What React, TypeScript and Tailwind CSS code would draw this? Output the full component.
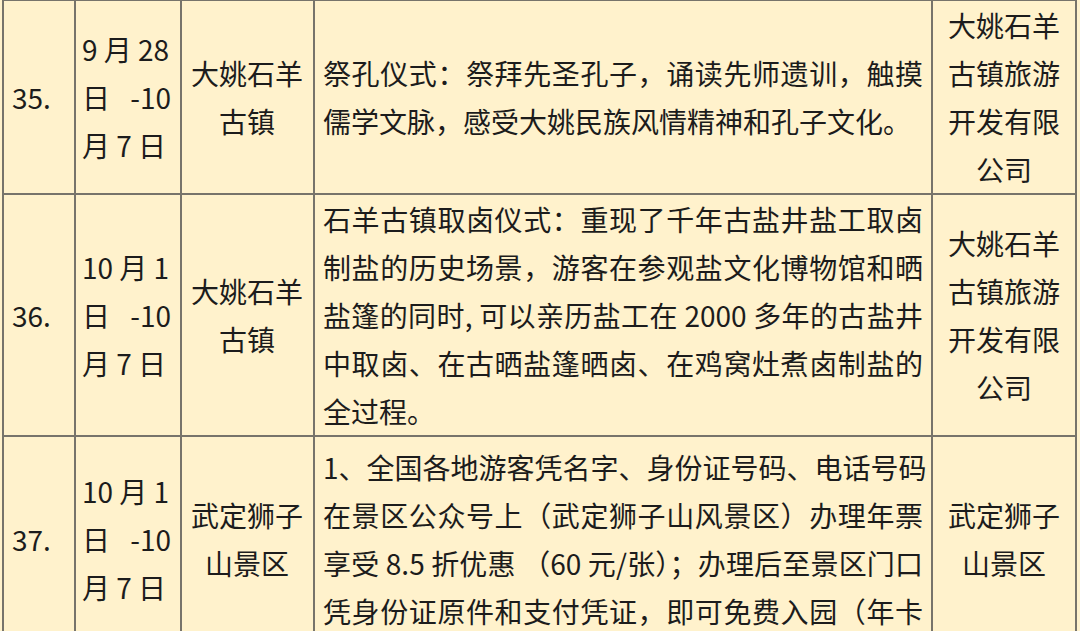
const line = "#77746b";

type Row = {
  no: string;
  date: string[];
  place: string[];
  detail: string[];
  org: string[];
  fixedHeight?: boolean;
};

const rows: Row[] = [
  {
    no: "35.",
    date: ["9 月 28", "日\u2002 -10", "月 7 日"],
    place: ["大姚石羊", "古镇"],
    detail: [
      "祭孔仪式：祭拜先圣孔子，诵读先师遗训，触摸",
      "儒学文脉，感受大姚民族风情精神和孔子文化。",
    ],
    org: ["大姚石羊", "古镇旅游", "开发有限", "公司"],
  },
  {
    no: "36.",
    date: ["10 月 1", "日\u2002 -10", "月 7 日"],
    place: ["大姚石羊", "古镇"],
    detail: [
      "石羊古镇取卤仪式：重现了千年古盐井盐工取卤",
      "制盐的历史场景，游客在参观盐文化博物馆和晒",
      "盐篷的同时, 可以亲历盐工在 2000 多年的古盐井",
      "中取卤、在古晒盐篷晒卤、在鸡窝灶煮卤制盐的",
      "全过程。",
    ],
    org: ["大姚石羊", "古镇旅游", "开发有限", "公司"],
  },
  {
    no: "37.",
    date: ["10 月 1", "日\u2002 -10", "月 7 日"],
    place: ["武定狮子", "山景区"],
    detail: [
      "1、全国各地游客凭名字、身份证号码、电话号码",
      "在景区公众号上（武定狮子山风景区）办理年票",
      "享受 8.5 折优惠 （60 元/张）；办理后至景区门口",
      "凭身份证原件和支付凭证，即可免费入园（年卡",
    ],
    org: ["武定狮子", "山景区"],
    fixedHeight: true,
  },
];

function Lines({ items, center }: { items: string[]; center?: boolean }) {
  return (
    <div className={center ? "text-center" : "text-left"}>
      {items.map((t, i) => (
        <div key={i} className="whitespace-pre">
          {t}
        </div>
      ))}
    </div>
  );
}

function Cell({
  children,
  className = "",
  fixed,
}: {
  children: React.ReactNode;
  className?: string;
  fixed?: boolean;
}) {
  return (
    <div className={`border-r-2 border-b-2 border-[#77746b] ${className}`}>
      <div className={`flex flex-col justify-center ${fixed ? "h-[204px]" : "h-full"}`}>
        {children}
      </div>
    </div>
  );
}

export default function App() {
  return (
    <div className="h-[631px] w-[1080px] overflow-hidden bg-[#fff2cc] font-['Noto_Sans_CJK_SC',sans-serif] text-[28px] leading-[48px] text-[#1c1c1c]">
      <div className="ml-[2px] w-[1075px] border-t" style={{ borderColor: line }}>
        {rows.map((r) => (
          <div key={r.no} className="grid grid-cols-[74px_106px_133px_618px_144px]">
            <Cell className="border-l-2 pl-[8px]" fixed={r.fixedHeight}>
              <div>{r.no}</div>
            </Cell>
            <Cell className="pl-[6px]" fixed={r.fixedHeight}>
              <Lines items={r.date} />
            </Cell>
            <Cell className="pr-[1px]" fixed={r.fixedHeight}>
              <Lines items={r.place} center />
            </Cell>
            <div
              className={`border-r-2 border-b-2 border-[#77746b] px-[8px] ${
                r.fixedHeight ? "h-[220px] pt-[6px]" : "flex flex-col justify-center"
              }`}
            >
              {r.detail.map((t, i) => (
                <div
                  key={i}
                  className={
                    i < r.detail.length - 1 || r.fixedHeight
                      ? "whitespace-nowrap text-justify [text-align-last:justify]"
                      : "whitespace-nowrap"
                  }
                >
                  {t}
                </div>
              ))}
            </div>
            <Cell fixed={r.fixedHeight}>
              <Lines items={r.org} center />
            </Cell>
          </div>
        ))}
      </div>
    </div>
  );
}
